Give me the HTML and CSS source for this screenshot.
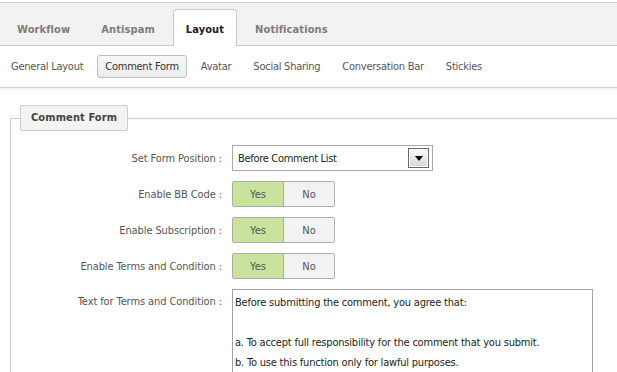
FILE: index.html
```html
<!DOCTYPE html>
<html>
<head>
<meta charset="utf-8">
<link rel="stylesheet" href="styles.css">
</head>
<body>
<div class="page">
  <nav class="tabs">
    <a class="tab">Workflow</a>
    <a class="tab">Antispam</a>
    <a class="tab active">Layout</a>
    <a class="tab">Notifications</a>
  </nav>
  <nav class="subtabs">
    <a class="subtab">General Layout</a>
    <a class="subtab active">Comment Form</a>
    <a class="subtab">Avatar</a>
    <a class="subtab">Social Sharing</a>
    <a class="subtab">Conversation Bar</a>
    <a class="subtab">Stickies</a>
  </nav>
  <fieldset class="panel">
    <legend class="panel-title">Comment Form</legend>
    <div class="form-grid">
      <label class="field-label">Set Form Position :</label>
      <div class="select">
        <span class="select-value">Before Comment List</span>
        <span class="select-arrow"><span class="caret"></span></span>
      </div>

      <label class="field-label">Enable BB Code :</label>
      <div class="toggle"><span class="opt yes">Yes</span><span class="opt no">No</span></div>

      <label class="field-label">Enable Subscription :</label>
      <div class="toggle"><span class="opt yes">Yes</span><span class="opt no">No</span></div>

      <label class="field-label">Enable Terms and Condition :</label>
      <div class="toggle"><span class="opt yes">Yes</span><span class="opt no">No</span></div>

      <label class="field-label top">Text for Terms and Condition :</label>
      <textarea class="terms">Before submitting the comment, you agree that:

a. To accept full responsibility for the comment that you submit.
b. To use this function only for lawful purposes.
c. Not to post defamatory, abusive, offensive, racist, sexist, threatening, vulgar, obscene, hateful or otherwise inappropriate comments.</textarea>
    </div>
  </fieldset>
</div>
</body>
</html>
```
FILE: styles.css
```css
html, body {
  margin: 0;
  padding: 0;
  overflow: hidden;
  background: #fff;
}
body {
  font-family: "DejaVu Sans Condensed", "Liberation Sans", sans-serif;
  font-size: 11px;
  color: #555;
}
.page {
  padding-top: 2px;
}
.tabs {
  display: flex;
  align-items: flex-end;
  gap: 5px;
  height: 42px;
  padding-left: 4px;
  background: #f2f2f2;
  border-top: 1px solid #d2d2d2;
  border-bottom: 1px solid #c8c8c8;
}
.tab {
  box-sizing: border-box;
  height: 37px;
  margin-bottom: -1px;
  padding: 3px 12px 0;
  display: flex;
  align-items: center;
  font-weight: bold;
  font-size: 11px;
  letter-spacing: 0.1px;
  color: #7d7d7d;
  border: 1px solid transparent;
  border-bottom: none;
  border-radius: 4px 4px 0 0;
}
.tab.active {
  background: #fff;
  border-color: #c8c8c8;
  color: #1c1c28;
}
.subtabs {
  display: flex;
  align-items: center;
  gap: 6px;
  height: 41px;
  padding-left: 3px;
  border-bottom: 1px solid #cfcfcf;
  box-shadow: 0 2px 0 #f5f5f5;
}
.subtab {
  box-sizing: border-box;
  height: 23px;
  display: flex;
  align-items: center;
  padding: 0 7px;
  border: 1px solid transparent;
  border-radius: 3px;
  letter-spacing: -0.25px;
  color: #555;
}
.subtab.active {
  border-color: #bdbdbd;
  background: linear-gradient(#f8f8f8, #ececec);
  color: #333;
}
.panel {
  margin: 17px -20px 0 10px;
  padding: 14px 0 20px 9px;
  border: 1px solid #cdcdcd;
  min-width: 0;
}
.panel-title {
  box-sizing: border-box;
  height: 26px;
  padding: 0 10px;
  line-height: 24px;
  border: 1px solid #cdcdcd;
  border-radius: 2px;
  background: #f3f3f3;
  font-weight: bold;
  letter-spacing: 0.1px;
  color: #444;
}
.form-grid {
  display: grid;
  grid-template-columns: 202px auto;
  column-gap: 10px;
  row-gap: 10px;
  align-items: center;
  justify-items: start;
}
.field-label {
  justify-self: end;
  text-align: right;
  letter-spacing: -0.1px;
  color: #555;
}
.field-label.top {
  align-self: start;
  padding-top: 6px;
}
.select {
  box-sizing: border-box;
  width: 201px;
  height: 26px;
  display: flex;
  align-items: center;
  justify-content: space-between;
  padding: 0 3px 0 5px;
  border: 1px solid #a9a9a9;
  background: #fff;
  color: #222;
  letter-spacing: -0.3px;
}
.select-arrow {
  box-sizing: border-box;
  width: 21px;
  height: 20px;
  display: flex;
  align-items: center;
  justify-content: center;
  border: 1px solid #6a6a6a;
  box-shadow: inset 0 0 0 1px #fff;
  background: linear-gradient(#fdfdfd, #d6d6d6);
}
.caret {
  width: 0;
  height: 0;
  border-left: 4px solid transparent;
  border-right: 4px solid transparent;
  border-top: 5px solid #000;
}
.toggle {
  box-sizing: border-box;
  display: flex;
  height: 26px;
  border: 1px solid #acacac;
  border-radius: 2px;
  overflow: hidden;
}
.opt {
  display: flex;
  align-items: center;
  justify-content: center;
  width: 50px;
  color: #555;
}
.opt.yes {
  background: #c9e29c;
}
.opt.no {
  background: #f2f2f2;
  border-left: 1px solid #acacac;
}
.terms {
  box-sizing: border-box;
  width: 361px;
  height: 110px;
  margin: 0;
  padding: 3px 2px 2px;
  border: 1px solid #a4a4a4;
  font-family: "DejaVu Sans Condensed", "Liberation Sans", sans-serif;
  font-size: 11px;
  line-height: 20px;
  letter-spacing: -0.2px;
  color: #222;
  resize: none;
  overflow: hidden;
}
```
